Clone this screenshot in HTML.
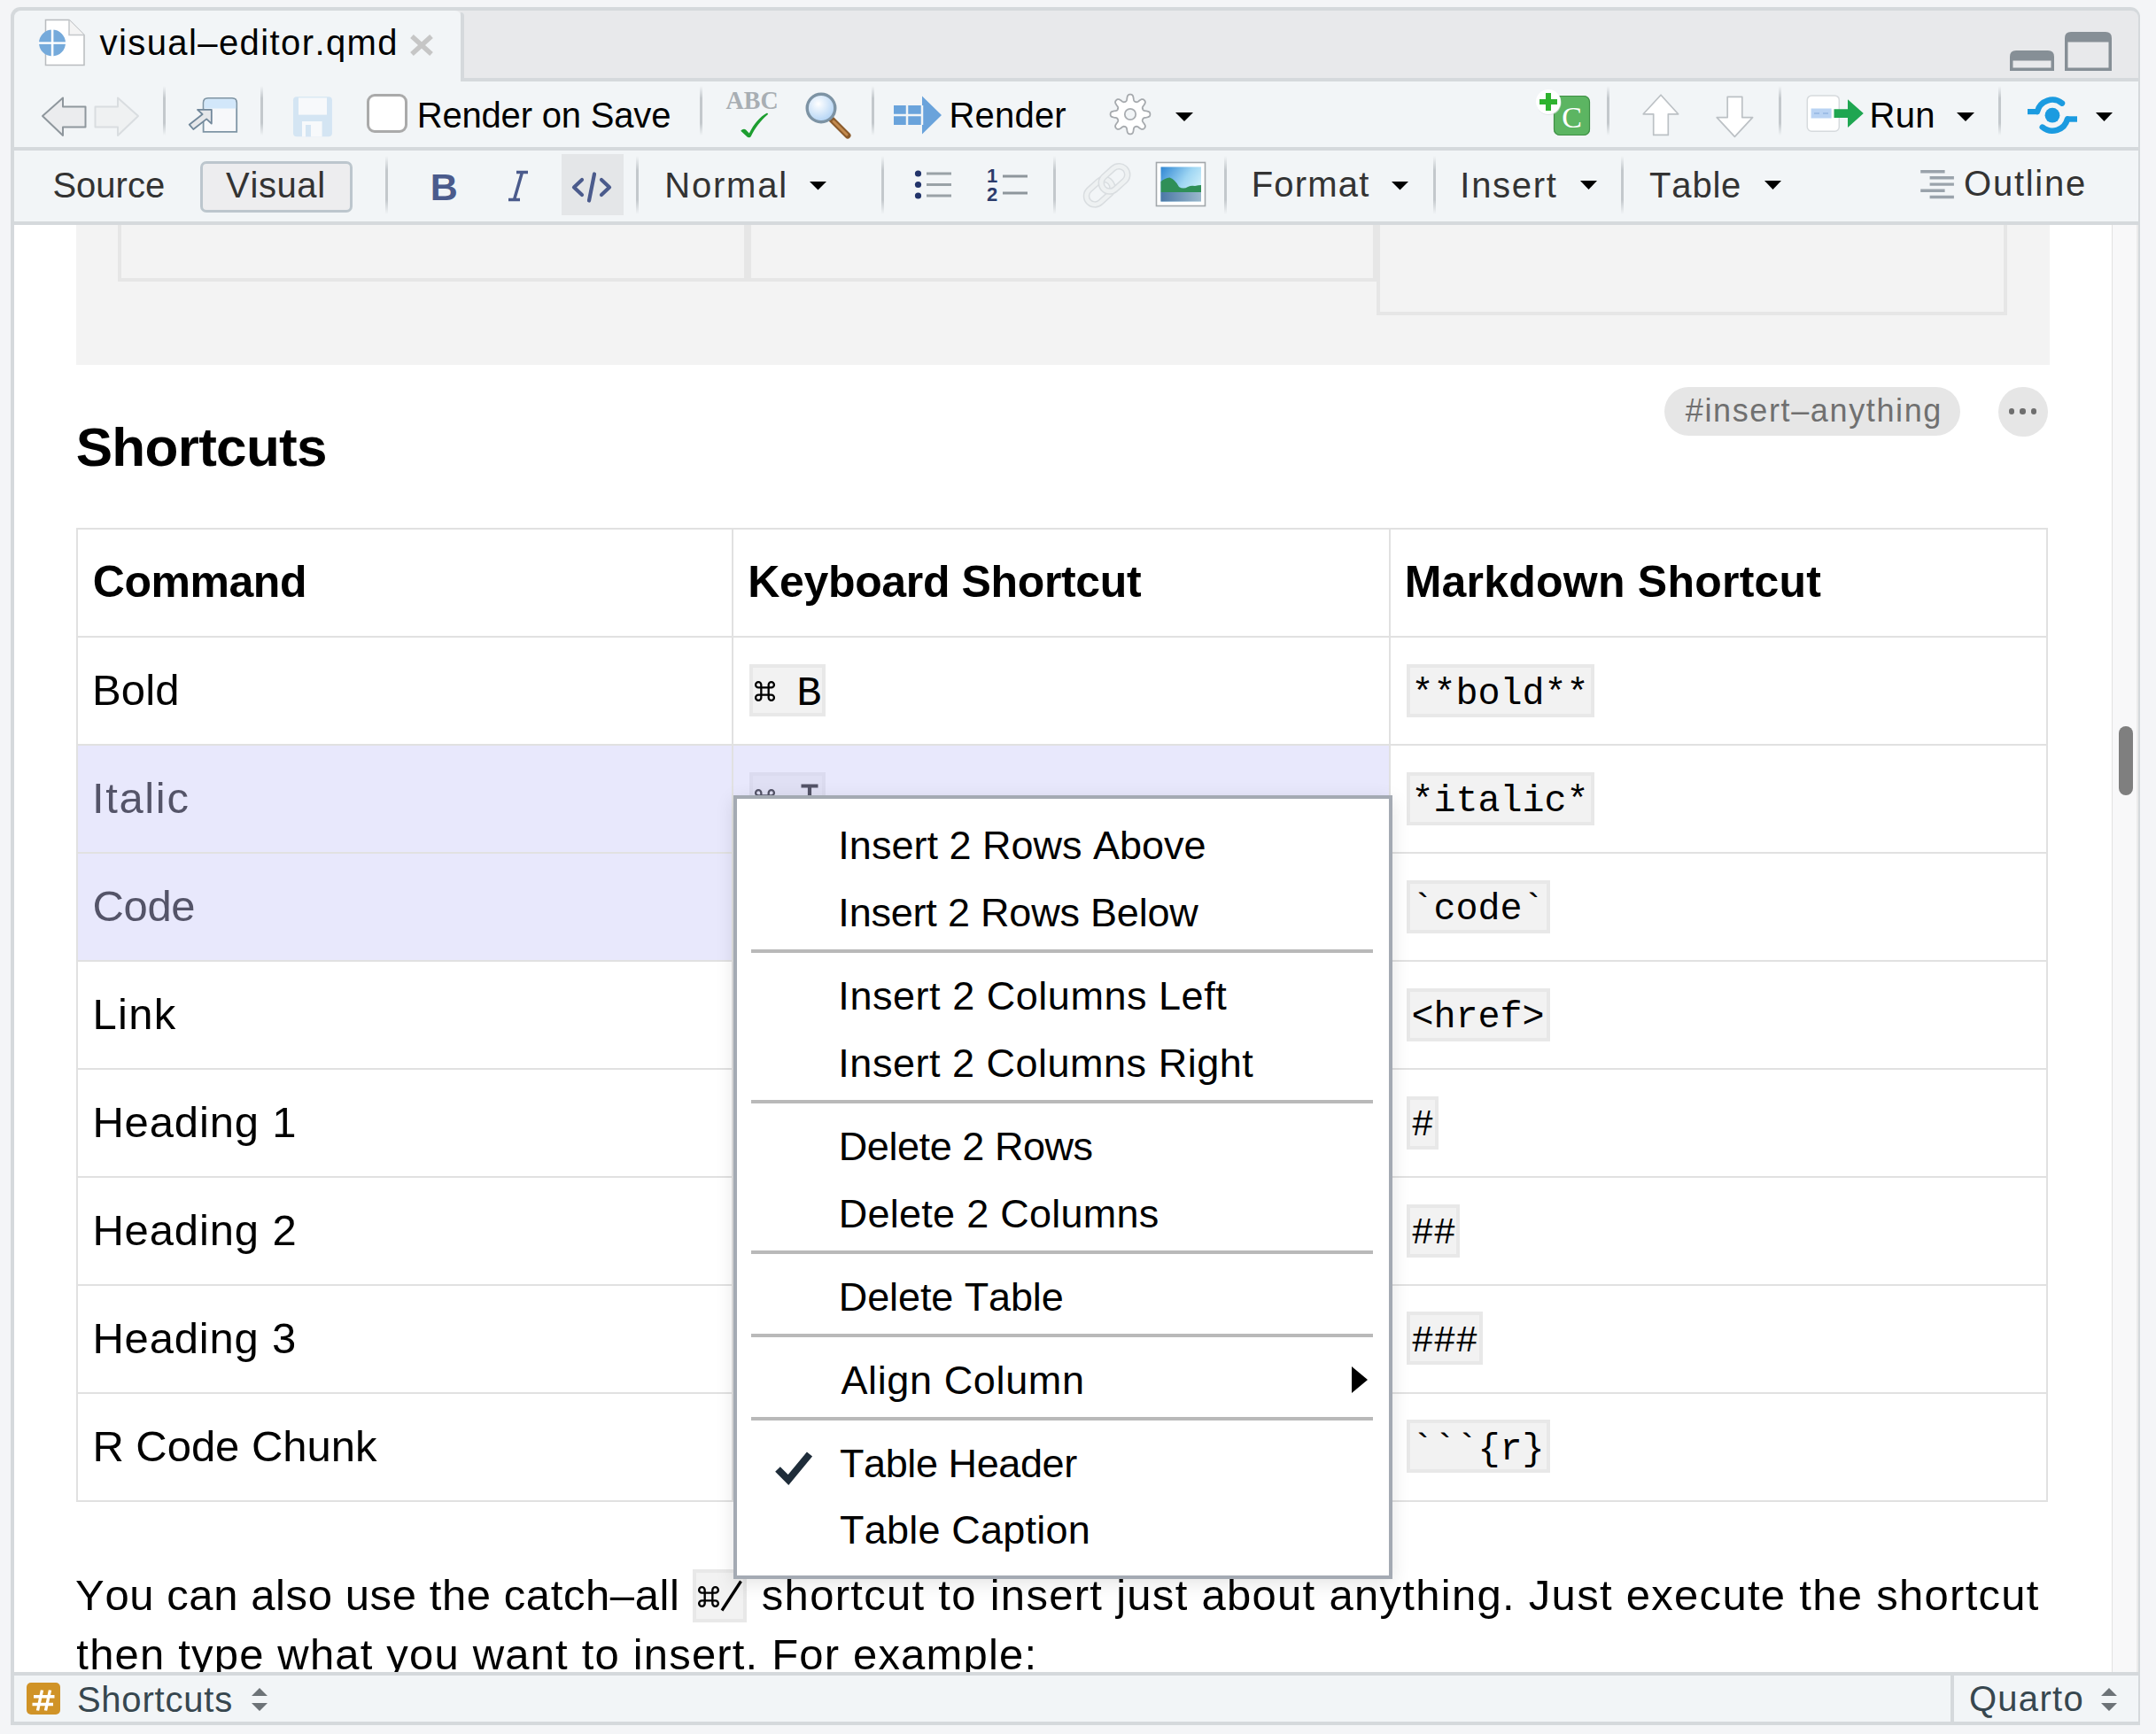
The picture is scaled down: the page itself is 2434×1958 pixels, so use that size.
<!DOCTYPE html>
<html><head><meta charset="utf-8"><title>visual-editor.qmd</title>
<style>
html,body{margin:0;padding:0;}
body{width:2434px;height:1958px;overflow:hidden;position:relative;background:#f4f5f7;font-family:"Liberation Sans", sans-serif;}
.t{position:absolute;line-height:1;white-space:pre;font-kerning:none;font-feature-settings:"kern" 0,"liga" 0;}
.r{position:absolute;}
</style></head><body>

<div class="r" style="left:12px;top:8px;width:2404px;height:1940px;background:#d5d9dc;border-radius:11px 11px 0 0;"></div>
<div class="r" style="left:16px;top:12px;width:2398px;height:76px;background:#e8e9eb;border-radius:8px 8px 0 0;"></div>
<div class="r" style="left:520px;top:88px;width:1896px;height:4px;background:#d5d9dc;"></div>
<div class="r" style="left:16px;top:12px;width:504px;height:80px;background:#f2f5f7;border-radius:8px 6px 0 0;"></div>
<div class="r" style="left:520px;top:14px;width:4px;height:74px;background:#d5d9dc;border-radius:0 6px 0 0;"></div>
<div class="r" style="left:16px;top:92px;width:2398px;height:74px;background:#f2f5f7;"></div>
<div class="r" style="left:16px;top:166px;width:2398px;height:4px;background:#d5d9dc;"></div>
<div class="r" style="left:16px;top:170px;width:2398px;height:80px;background:#f2f5f7;"></div>
<div class="r" style="left:16px;top:250px;width:2398px;height:4px;background:#d5d9dc;"></div>
<div class="r" style="left:16px;top:254px;width:2398px;height:1634px;background:#ffffff;"></div>
<svg class="r" style="left:40px;top:18px;" width="60" height="60" viewBox="0 0 60 60">
<path d="M11.5 4.5 H38 L55 21.5 V55.5 H11.5 Z" fill="#ffffff" stroke="#b9bcbf" stroke-width="1.5"/>
<path d="M38 4.5 V21.5 H55" fill="#f4f4f4" stroke="#c4c7ca" stroke-width="1.5"/>
<circle cx="19" cy="30.5" r="15" fill="#75aadb"/>
<rect x="17.8" y="15" width="2.6" height="31" fill="#ffffff"/>
<rect x="3.5" y="29.4" width="31" height="2.4" fill="#ffffff"/>
</svg>
<div class="t" style="left:112.56px;top:28.13px;font-size:40px;font-weight:normal;color:#000;letter-spacing:1.407px;font-family:'Liberation Sans', sans-serif;">visual–editor.qmd</div>
<svg class="r" style="left:461px;top:37px;" width="30" height="28" viewBox="0 0 30 28"><path d="M4 4 L26 24 M26 4 L4 24" stroke="#c6c6c6" stroke-width="5.5" stroke-linecap="butt"/></svg>
<svg class="r" style="left:2269px;top:57px;" width="50" height="23" viewBox="0 0 50 23"><path d="M1.75 21.25 V7 Q1.75 1.75 7 1.75 H43 Q48.25 1.75 48.25 7 V21.25 Z" fill="none" stroke="#868f96" stroke-width="3.5"/><rect x="1.75" y="1.75" width="46.5" height="9" rx="5" fill="#868f96"/><rect x="1.75" y="8" width="46.5" height="3.5" fill="#868f96"/></svg>
<svg class="r" style="left:2331px;top:36px;" width="53" height="44" viewBox="0 0 53 44"><path d="M1.75 42.25 V7 Q1.75 1.75 7 1.75 H46 Q51.25 1.75 51.25 7 V42.25 Z" fill="none" stroke="#868f96" stroke-width="3.5"/><rect x="1.75" y="1.75" width="49.5" height="9" rx="5" fill="#868f96"/><rect x="1.75" y="8" width="49.5" height="3.5" fill="#868f96"/></svg>
<div class="r" style="left:183.5px;top:97px;width:3px;height:56px;background:linear-gradient(to bottom, rgba(190,196,200,0) 0%, #c3c8cc 25%, #c3c8cc 75%, rgba(190,196,200,0) 100%);"></div>
<div class="r" style="left:293.5px;top:97px;width:3px;height:56px;background:linear-gradient(to bottom, rgba(190,196,200,0) 0%, #c3c8cc 25%, #c3c8cc 75%, rgba(190,196,200,0) 100%);"></div>
<div class="r" style="left:789.5px;top:97px;width:3px;height:56px;background:linear-gradient(to bottom, rgba(190,196,200,0) 0%, #c3c8cc 25%, #c3c8cc 75%, rgba(190,196,200,0) 100%);"></div>
<div class="r" style="left:983.5px;top:97px;width:3px;height:56px;background:linear-gradient(to bottom, rgba(190,196,200,0) 0%, #c3c8cc 25%, #c3c8cc 75%, rgba(190,196,200,0) 100%);"></div>
<div class="r" style="left:1813.5px;top:97px;width:3px;height:56px;background:linear-gradient(to bottom, rgba(190,196,200,0) 0%, #c3c8cc 25%, #c3c8cc 75%, rgba(190,196,200,0) 100%);"></div>
<div class="r" style="left:2007.5px;top:97px;width:3px;height:56px;background:linear-gradient(to bottom, rgba(190,196,200,0) 0%, #c3c8cc 25%, #c3c8cc 75%, rgba(190,196,200,0) 100%);"></div>
<div class="r" style="left:2255.5px;top:97px;width:3px;height:56px;background:linear-gradient(to bottom, rgba(190,196,200,0) 0%, #c3c8cc 25%, #c3c8cc 75%, rgba(190,196,200,0) 100%);"></div>
<svg class="r" style="left:44px;top:108px;" width="56" height="48" viewBox="0 0 56 48"><path d="M4 23 L27 2.5 V12.5 H52.5 V35.5 H27 V45 Z" fill="#ebecee" stroke="#8f979d" stroke-width="2" stroke-linejoin="round"/></svg>
<svg class="r" style="left:104px;top:108px;" width="56" height="48" viewBox="0 0 56 48"><path d="M52 23 L29 2.5 V12.5 H3.5 V35.5 H29 V45 Z" fill="#eff1f2" stroke="#d9dde0" stroke-width="2" stroke-linejoin="round"/></svg>
<svg class="r" style="left:212px;top:108px;" width="58" height="44" viewBox="0 0 58 44">
<path d="M17.6 40.8 V8 Q17.6 2.9 22.7 2.9 H50.1 Q55.2 2.9 55.2 8 V40.8 Z" fill="#f7f8fa" stroke="#7f95a5" stroke-width="1.8"/>
<path d="M18.5 14.5 V8.2 Q18.5 3.8 22.9 3.8 H49.9 Q54.3 3.8 54.3 8.2 V14.5 Z" fill="#d2e7fa"/>
<path d="M11 15.8 L26.8 15.8 L26.8 31.6 L21.2 26.4 L6.3 38 L1.7 32.7 L16.6 21 Z" fill="#e6e7ea" stroke="#71879a" stroke-width="1.8" stroke-linejoin="round"/>
</svg>
<svg class="r" style="left:329px;top:107px;" width="49" height="49" viewBox="0 0 49 49">
<rect x="2" y="2.2" width="43.9" height="45.1" rx="4" fill="#d4e5f3"/>
<rect x="8" y="3.4" width="32" height="19.2" fill="#f7f9fb"/>
<rect x="12" y="30" width="22.6" height="17.3" fill="#f7f9fb"/>
<rect x="16" y="34" width="6" height="13.3" fill="#d4e5f3"/>
</svg>
<div class="r" style="left:414px;top:106px;width:45.6px;height:43.6px;box-sizing:border-box;border:3.5px solid #aaaaaa;border-radius:9px;background:#fff;"></div>
<div class="t" style="left:470.72px;top:110.43px;font-size:40px;font-weight:normal;color:#000;letter-spacing:-0.186px;font-family:'Liberation Sans', sans-serif;">Render on Save</div>
<svg class="r" style="left:818px;top:98px;" width="64" height="28" viewBox="0 0 64 28"><text x="1.6" y="24.8" font-family="Liberation Serif" font-weight="bold" font-size="29.5" fill="#a8aeb3" textLength="59" lengthAdjust="spacingAndGlyphs">ABC</text></svg>
<svg class="r" style="left:834px;top:126px;" width="36" height="32" viewBox="0 0 36 32"><path d="M2.2 21.8 C4 19.5 6.5 19 8 20.5 L11.8 24.5 C17 14 24 6 31.5 1.8 C33 1.3 33.5 2.8 32.5 3.5 C25 10 18 19 13.8 28 C13 29.5 10.5 29.8 9.5 28.5 Z" fill="#1d9e30"/></svg>
<svg class="r" style="left:906px;top:102px;" width="58" height="56" viewBox="0 0 58 56">
<defs><radialGradient id="mg" cx="40%" cy="35%" r="70%"><stop offset="0" stop-color="#ffffff"/><stop offset="1" stop-color="#acd0f4"/></radialGradient></defs>
<path d="M33 33 L51 51" stroke="#8a5a2b" stroke-width="7" stroke-linecap="round"/>
<path d="M35 35 L50 50" stroke="#c38a4e" stroke-width="3" stroke-linecap="round"/>
<circle cx="21" cy="20" r="15.8" fill="url(#mg)" stroke="#7d93a4" stroke-width="3.4"/>
</svg>
<svg class="r" style="left:1007px;top:106px;" width="58" height="48" viewBox="0 0 58 48">
<path d="M2 13 H34 V2.5 L56 24 L34 45.5 V35 H2 Z" fill="#6aa3db"/>
<path d="M2 24 H34 M17 13 V35" stroke="#f2f5f7" stroke-width="2.5"/>
<path d="M34 13 V35" stroke="#f2f5f7" stroke-width="2.5"/>
</svg>
<div class="t" style="left:1071.52px;top:109.83px;font-size:40px;font-weight:normal;color:#000;letter-spacing:0.191px;font-family:'Liberation Sans', sans-serif;">Render</div>
<svg class="r" style="left:1248.6px;top:101.7px;" width="54" height="54" viewBox="0 0 54 54">
<path d="M27.00 4.60 L27.44 4.62 L27.88 4.67 L28.31 4.78 L28.74 4.94 L29.15 5.20 L29.54 5.58 L29.89 6.13 L30.19 6.87 L30.43 7.80 L30.62 8.82 L30.77 9.81 L30.93 10.65 L31.10 11.29 L31.30 11.76 L31.52 12.10 L31.76 12.35 L32.01 12.54 L32.28 12.70 L32.54 12.84 L32.82 12.96 L33.10 13.06 L33.38 13.16 L33.68 13.23 L34.00 13.27 L34.34 13.26 L34.74 13.18 L35.21 12.99 L35.79 12.66 L36.49 12.18 L37.30 11.59 L38.15 11.00 L38.98 10.51 L39.72 10.20 L40.35 10.06 L40.90 10.07 L41.37 10.18 L41.79 10.36 L42.17 10.59 L42.52 10.86 L42.84 11.16 L43.14 11.48 L43.41 11.83 L43.64 12.21 L43.82 12.63 L43.93 13.10 L43.94 13.65 L43.80 14.28 L43.49 15.02 L43.00 15.85 L42.41 16.70 L41.82 17.51 L41.34 18.21 L41.01 18.79 L40.82 19.26 L40.74 19.66 L40.73 20.00 L40.77 20.32 L40.84 20.62 L40.94 20.90 L41.04 21.18 L41.16 21.46 L41.30 21.72 L41.46 21.99 L41.65 22.24 L41.90 22.48 L42.24 22.70 L42.71 22.90 L43.35 23.07 L44.19 23.23 L45.18 23.38 L46.20 23.57 L47.13 23.81 L47.87 24.11 L48.42 24.46 L48.80 24.85 L49.06 25.26 L49.22 25.69 L49.33 26.12 L49.38 26.56 L49.40 27.00 L49.38 27.44 L49.33 27.88 L49.22 28.31 L49.06 28.74 L48.80 29.15 L48.42 29.54 L47.87 29.89 L47.13 30.19 L46.20 30.43 L45.18 30.62 L44.19 30.77 L43.35 30.93 L42.71 31.10 L42.24 31.30 L41.90 31.52 L41.65 31.76 L41.46 32.01 L41.30 32.28 L41.16 32.54 L41.04 32.82 L40.94 33.10 L40.84 33.38 L40.77 33.68 L40.73 34.00 L40.74 34.34 L40.82 34.74 L41.01 35.21 L41.34 35.79 L41.82 36.49 L42.41 37.30 L43.00 38.15 L43.49 38.98 L43.80 39.72 L43.94 40.35 L43.93 40.90 L43.82 41.37 L43.64 41.79 L43.41 42.17 L43.14 42.52 L42.84 42.84 L42.52 43.14 L42.17 43.41 L41.79 43.64 L41.37 43.82 L40.90 43.93 L40.35 43.94 L39.72 43.80 L38.98 43.49 L38.15 43.00 L37.30 42.41 L36.49 41.82 L35.79 41.34 L35.21 41.01 L34.74 40.82 L34.34 40.74 L34.00 40.73 L33.68 40.77 L33.38 40.84 L33.10 40.94 L32.82 41.04 L32.54 41.16 L32.28 41.30 L32.01 41.46 L31.76 41.65 L31.52 41.90 L31.30 42.24 L31.10 42.71 L30.93 43.35 L30.77 44.19 L30.62 45.18 L30.43 46.20 L30.19 47.13 L29.89 47.87 L29.54 48.42 L29.15 48.80 L28.74 49.06 L28.31 49.22 L27.88 49.33 L27.44 49.38 L27.00 49.40 L26.56 49.38 L26.12 49.33 L25.69 49.22 L25.26 49.06 L24.85 48.80 L24.46 48.42 L24.11 47.87 L23.81 47.13 L23.57 46.20 L23.38 45.18 L23.23 44.19 L23.07 43.35 L22.90 42.71 L22.70 42.24 L22.48 41.90 L22.24 41.65 L21.99 41.46 L21.72 41.30 L21.46 41.16 L21.18 41.04 L20.90 40.94 L20.62 40.84 L20.32 40.77 L20.00 40.73 L19.66 40.74 L19.26 40.82 L18.79 41.01 L18.21 41.34 L17.51 41.82 L16.70 42.41 L15.85 43.00 L15.02 43.49 L14.28 43.80 L13.65 43.94 L13.10 43.93 L12.63 43.82 L12.21 43.64 L11.83 43.41 L11.48 43.14 L11.16 42.84 L10.86 42.52 L10.59 42.17 L10.36 41.79 L10.18 41.37 L10.07 40.90 L10.06 40.35 L10.20 39.72 L10.51 38.98 L11.00 38.15 L11.59 37.30 L12.18 36.49 L12.66 35.79 L12.99 35.21 L13.18 34.74 L13.26 34.34 L13.27 34.00 L13.23 33.68 L13.16 33.38 L13.06 33.10 L12.96 32.82 L12.84 32.54 L12.70 32.28 L12.54 32.01 L12.35 31.76 L12.10 31.52 L11.76 31.30 L11.29 31.10 L10.65 30.93 L9.81 30.77 L8.82 30.62 L7.80 30.43 L6.87 30.19 L6.13 29.89 L5.58 29.54 L5.20 29.15 L4.94 28.74 L4.78 28.31 L4.67 27.88 L4.62 27.44 L4.60 27.00 L4.62 26.56 L4.67 26.12 L4.78 25.69 L4.94 25.26 L5.20 24.85 L5.58 24.46 L6.13 24.11 L6.87 23.81 L7.80 23.57 L8.82 23.38 L9.81 23.23 L10.65 23.07 L11.29 22.90 L11.76 22.70 L12.10 22.48 L12.35 22.24 L12.54 21.99 L12.70 21.72 L12.84 21.46 L12.96 21.18 L13.06 20.90 L13.16 20.62 L13.23 20.32 L13.27 20.00 L13.26 19.66 L13.18 19.26 L12.99 18.79 L12.66 18.21 L12.18 17.51 L11.59 16.70 L11.00 15.85 L10.51 15.02 L10.20 14.28 L10.06 13.65 L10.07 13.10 L10.18 12.63 L10.36 12.21 L10.59 11.83 L10.86 11.48 L11.16 11.16 L11.48 10.86 L11.83 10.59 L12.21 10.36 L12.63 10.18 L13.10 10.07 L13.65 10.06 L14.28 10.20 L15.02 10.51 L15.85 11.00 L16.70 11.59 L17.51 12.18 L18.21 12.66 L18.79 12.99 L19.26 13.18 L19.66 13.26 L20.00 13.27 L20.32 13.23 L20.62 13.16 L20.90 13.06 L21.18 12.96 L21.46 12.84 L21.72 12.70 L21.99 12.54 L22.24 12.35 L22.48 12.10 L22.70 11.76 L22.90 11.29 L23.07 10.65 L23.23 9.81 L23.38 8.82 L23.57 7.80 L23.81 6.87 L24.11 6.13 L24.46 5.58 L24.85 5.20 L25.26 4.94 L25.69 4.78 L26.12 4.67 L26.56 4.62 Z" fill="#ffffff" stroke="#a5a9ad" stroke-width="1.8" stroke-linejoin="round"/>
<circle cx="27" cy="27" r="6.2" fill="#f2f5f7" stroke="#a9adb1" stroke-width="1.8"/>
</svg>
<svg class="r" style="left:1327px;top:126.5px;" width="20" height="10.0" viewBox="0 0 20 10.0"><path d="M0 0 H20 L10.0 10.0 Z" fill="#000"/></svg>
<svg class="r" style="left:1730px;top:98px;" width="68" height="58" viewBox="0 0 68 58">
<rect x="24" y="10" width="41" height="45" rx="7" fill="#5cb562"/>
<rect x="24.5" y="10.5" width="40" height="44" rx="6.5" fill="none" stroke="#3f8f45" stroke-width="1.2"/>
<text x="44.5" y="46" text-anchor="middle" font-family="Liberation Serif" font-size="34" fill="#ffffff">C</text>
<circle cx="18.5" cy="18" r="14" fill="#d9dcde" opacity="0.7"/><circle cx="18" cy="17" r="14" fill="#ffffff"/>
<path d="M18 7 V27 M8 17 H28" stroke="#2fb32f" stroke-width="6"/>
</svg>
<svg class="r" style="left:1851px;top:104px;" width="48" height="52" viewBox="0 0 48 52"><path d="M24 3.2 L43.6 24.8 H32.3 V48.4 H15.7 V24.8 H4.2 Z" fill="#ffffff" stroke="#bcc1c5" stroke-width="1.7" stroke-linejoin="round"/></svg>
<svg class="r" style="left:1935px;top:106px;" width="48" height="52" viewBox="0 0 48 52"><path d="M23.4 48.4 L43.6 26.6 H31.8 V3.4 H15.2 V26.6 H3.2 Z" fill="#ffffff" stroke="#bcc1c5" stroke-width="1.7" stroke-linejoin="round"/></svg>
<svg class="r" style="left:2037px;top:104px;" width="70" height="48" viewBox="0 0 70 48">
<rect x="3.3" y="3.9" width="36" height="40.3" rx="5" fill="#ffffff" stroke="#d6dadd" stroke-width="1.5"/>
<rect x="7.6" y="18.5" width="23" height="11" fill="#b9d3f3"/>
<path d="M11 24 H17 M21 24 H27" stroke="#9dbde6" stroke-width="2"/>
<path d="M33.5 19.3 H49 V8.2 L66.8 24.1 L49 39.9 V29 H33.5 Z" fill="#1fa651"/>
</svg>
<div class="t" style="left:2110.42px;top:110.03px;font-size:40px;font-weight:normal;color:#000;letter-spacing:0.400px;font-family:'Liberation Sans', sans-serif;">Run</div>
<svg class="r" style="left:2209px;top:127px;" width="20" height="10" viewBox="0 0 20 10"><path d="M0 0 H20 L10.0 10 Z" fill="#000"/></svg>
<svg class="r" style="left:2286px;top:105px;" width="62" height="50" viewBox="0 0 62 50">
<path d="M14 21 A17.5 17.5 0 0 1 42 11.6" fill="none" stroke="#1b9be0" stroke-width="6.5" stroke-linecap="round"/>
<path d="M48 29.4 A17.5 17.5 0 0 1 19.75 38.6" fill="none" stroke="#1b9be0" stroke-width="6.5" stroke-linecap="round"/>
<rect x="3" y="18" width="12" height="6.2" fill="#1b9be0"/>
<rect x="47" y="26.3" width="12" height="6.4" fill="#1b9be0"/>
<circle cx="31" cy="25.2" r="8.4" fill="#1b9be0"/>
</svg>
<svg class="r" style="left:2366px;top:127px;" width="19" height="10" viewBox="0 0 19 10"><path d="M0 0 H19 L9.5 10 Z" fill="#000"/></svg>
<div class="r" style="left:434.5px;top:176px;width:3px;height:66px;background:linear-gradient(to bottom, rgba(190,196,200,0) 0%, #c3c8cc 25%, #c3c8cc 75%, rgba(190,196,200,0) 100%);"></div>
<div class="r" style="left:717.5px;top:176px;width:3px;height:66px;background:linear-gradient(to bottom, rgba(190,196,200,0) 0%, #c3c8cc 25%, #c3c8cc 75%, rgba(190,196,200,0) 100%);"></div>
<div class="r" style="left:994.5px;top:176px;width:3px;height:66px;background:linear-gradient(to bottom, rgba(190,196,200,0) 0%, #c3c8cc 25%, #c3c8cc 75%, rgba(190,196,200,0) 100%);"></div>
<div class="r" style="left:1188.5px;top:176px;width:3px;height:66px;background:linear-gradient(to bottom, rgba(190,196,200,0) 0%, #c3c8cc 25%, #c3c8cc 75%, rgba(190,196,200,0) 100%);"></div>
<div class="r" style="left:1382.1px;top:176px;width:3px;height:66px;background:linear-gradient(to bottom, rgba(190,196,200,0) 0%, #c3c8cc 25%, #c3c8cc 75%, rgba(190,196,200,0) 100%);"></div>
<div class="r" style="left:1617.5px;top:176px;width:3px;height:66px;background:linear-gradient(to bottom, rgba(190,196,200,0) 0%, #c3c8cc 25%, #c3c8cc 75%, rgba(190,196,200,0) 100%);"></div>
<div class="r" style="left:1829.5px;top:176px;width:3px;height:66px;background:linear-gradient(to bottom, rgba(190,196,200,0) 0%, #c3c8cc 25%, #c3c8cc 75%, rgba(190,196,200,0) 100%);"></div>
<div class="t" style="left:59.38px;top:188.73px;font-size:40px;font-weight:normal;color:#333333;letter-spacing:0.011px;font-family:'Liberation Sans', sans-serif;">Source</div>
<div class="r" style="left:226px;top:182px;width:172px;height:58px;box-sizing:border-box;border:3px solid #bcc6cd;border-radius:7px;background:#ededef;"></div>
<div class="t" style="left:255.12px;top:188.73px;font-size:40px;font-weight:normal;color:#333333;letter-spacing:0.601px;font-family:'Liberation Sans', sans-serif;">Visual</div>
<div class="t" style="left:485.72px;top:189.59px;font-size:43px;font-weight:bold;color:#4b5b8c;letter-spacing:0.000px;font-family:'Liberation Sans', sans-serif;">B</div>
<svg class="r" style="left:570px;top:192px;" width="30" height="36" viewBox="0 0 30 36"><path d="M13 2.5 H26 M4 33.5 H17 M19.5 2.5 L10.5 33.5" fill="none" stroke="#4b5b8c" stroke-width="3.5"/></svg>
<div class="r" style="left:634px;top:174px;width:70px;height:69px;background:#e4e6e8;"></div>
<svg class="r" style="left:644px;top:194px;" width="48" height="35" viewBox="0 0 48 35"><path d="M13 9 L4 17.5 L13 26 M35 9 L44 17.5 L35 26 M27 2.5 L21 32.5" fill="none" stroke="#4b5b8c" stroke-width="4.2" stroke-linecap="round" stroke-linejoin="round"/></svg>
<div class="t" style="left:750.32px;top:188.63px;font-size:40px;font-weight:normal;color:#333333;letter-spacing:1.770px;font-family:'Liberation Sans', sans-serif;">Normal</div>
<svg class="r" style="left:913.5px;top:205px;" width="19.0" height="9.5" viewBox="0 0 19.0 9.5"><path d="M0 0 H19.0 L9.5 9.5 Z" fill="#000"/></svg>
<svg class="r" style="left:1031px;top:191px;" width="46" height="38" viewBox="0 0 46 38">
<circle cx="5.5" cy="5" r="3.6" fill="#22346a"/><circle cx="5.5" cy="17.5" r="3.6" fill="#22346a"/><circle cx="5.5" cy="30" r="3.6" fill="#22346a"/>
<path d="M15 5 H43 M15 17.5 H43 M15 30 H43" stroke="#9aa2a7" stroke-width="3"/>
</svg>
<svg class="r" style="left:1113px;top:189px;" width="50" height="40" viewBox="0 0 50 40">
<text x="7" y="17" text-anchor="middle" font-family="Liberation Sans" font-weight="bold" font-size="22" fill="#2c3c6c">1</text>
<text x="7" y="38" text-anchor="middle" font-family="Liberation Sans" font-weight="bold" font-size="22" fill="#2c3c6c">2</text>
<path d="M19 10 H47 M19 29 H47" stroke="#8e969c" stroke-width="3"/>
</svg>
<svg class="r" style="left:1220px;top:180px;" width="60" height="58" viewBox="0 0 60 58">
<g fill="none">
<rect x="4.7" y="27.2" width="33" height="19" rx="9.5" transform="rotate(-42 21.2 36.7)" stroke="#d9dde0" stroke-width="7.5"/>
<rect x="4.7" y="27.2" width="33" height="19" rx="9.5" transform="rotate(-42 21.2 36.7)" stroke="#eef1f2" stroke-width="4.5"/>
<rect x="21.5" y="12.4" width="33" height="19" rx="9.5" transform="rotate(-42 38 21.9)" stroke="#d9dde0" stroke-width="7.5"/>
<rect x="21.5" y="12.4" width="33" height="19" rx="9.5" transform="rotate(-42 38 21.9)" stroke="#eef1f2" stroke-width="4.5"/>
</g></svg>
<svg class="r" style="left:1303px;top:181px;" width="60" height="54" viewBox="0 0 60 54">
<defs><linearGradient id="sky" x1="0" y1="0" x2="1" y2="0.6"><stop offset="0" stop-color="#2f86d3"/><stop offset="0.6" stop-color="#9fd6f3"/><stop offset="1" stop-color="#d2f1fb"/></linearGradient>
<linearGradient id="wat" x1="0" y1="0" x2="1" y2="0"><stop offset="0" stop-color="#4b78a6"/><stop offset="1" stop-color="#9bb8cc"/></linearGradient></defs>
<rect x="2.5" y="2.5" width="55" height="49" fill="#ffffff" stroke="#a2a7ab" stroke-width="1.6"/>
<rect x="7.5" y="7.5" width="45.5" height="39" fill="url(#sky)"/>
<path d="M7.5 24 Q12 20 17.5 19.5 Q24 22 28 30 Q33 33 38 30 Q42 28 46 29 Q50 28 53 28 V36 H7.5 Z" fill="#2f8f57"/>
<rect x="7.5" y="36" width="45.5" height="10.5" fill="url(#wat)"/>
</svg>
<div class="t" style="left:1412.72px;top:187.83px;font-size:40px;font-weight:normal;color:#333333;letter-spacing:1.179px;font-family:'Liberation Sans', sans-serif;">Format</div>
<svg class="r" style="left:1571px;top:205px;" width="19" height="9.5" viewBox="0 0 19 9.5"><path d="M0 0 H19 L9.5 9.5 Z" fill="#000"/></svg>
<div class="t" style="left:1648.31px;top:188.53px;font-size:40px;font-weight:normal;color:#333333;letter-spacing:1.729px;font-family:'Liberation Sans', sans-serif;">Insert</div>
<svg class="r" style="left:1783.5px;top:204px;" width="19.0" height="10" viewBox="0 0 19.0 10"><path d="M0 0 H19.0 L9.5 10 Z" fill="#000"/></svg>
<div class="t" style="left:1862.10px;top:188.53px;font-size:40px;font-weight:normal;color:#333333;letter-spacing:0.804px;font-family:'Liberation Sans', sans-serif;">Table</div>
<svg class="r" style="left:1991.5px;top:204px;" width="19.0" height="10" viewBox="0 0 19.0 10"><path d="M0 0 H19.0 L9.5 10 Z" fill="#000"/></svg>
<svg class="r" style="left:2166px;top:189px;" width="42" height="37" viewBox="0 0 42 37"><path d="M2.2 4.75 H29.6 M12.6 11.8 H39.9 M12.6 19.15 H39.9 M2.2 26.3 H29.6 M12.6 33.45 H39.9" stroke="#9aa3ab" stroke-width="3.4"/></svg>
<div class="t" style="left:2217.11px;top:186.63px;font-size:40px;font-weight:normal;color:#333333;letter-spacing:1.722px;font-family:'Liberation Sans', sans-serif;">Outline</div>
<div class="r" style="left:86px;top:254px;width:2228px;height:158px;background:#f3f3f3;"></div>
<div class="r" style="left:133px;top:254px;width:3.6px;height:64px;background:#e6e6e6;"></div>
<div class="r" style="left:133px;top:314px;width:711px;height:4px;background:#e6e6e6;"></div>
<div class="r" style="left:840px;top:254px;width:8px;height:64px;background:#e6e6e6;"></div>
<div class="r" style="left:848px;top:314px;width:706px;height:4px;background:#e6e6e6;"></div>
<div class="r" style="left:1550px;top:254px;width:8px;height:64px;background:#e6e6e6;"></div>
<div class="r" style="left:1554px;top:318px;width:4px;height:38px;background:#e6e6e6;"></div>
<div class="r" style="left:1554px;top:352px;width:712px;height:4px;background:#e6e6e6;"></div>
<div class="r" style="left:2262px;top:254px;width:4px;height:102px;background:#e6e6e6;"></div>
<div class="t" style="left:85.71px;top:474.31px;font-size:62px;font-weight:bold;color:#000;letter-spacing:-0.691px;font-family:'Liberation Sans', sans-serif;">Shortcuts</div>
<div class="r" style="left:1879px;top:436.5px;width:334px;height:55.5px;background:#e6e6e6;border-radius:28px;"></div>
<div class="t" style="left:1902.84px;top:445.72px;font-size:36px;font-weight:normal;color:#707070;letter-spacing:1.620px;font-family:'Liberation Sans', sans-serif;">#insert–anything</div>
<div class="r" style="left:2256px;top:437px;width:55.5px;height:55.5px;background:#e6e6e6;border-radius:50%;"></div>
<div class="r" style="left:2267.8px;top:461.2px;width:6.4px;height:6.4px;background:#6e6e6e;border-radius:50%;"></div>
<div class="r" style="left:2280.3px;top:461.2px;width:6.4px;height:6.4px;background:#6e6e6e;border-radius:50%;"></div>
<div class="r" style="left:2292.8px;top:461.2px;width:6.4px;height:6.4px;background:#6e6e6e;border-radius:50%;"></div>
<div class="r" style="left:86px;top:596px;width:2226px;height:2px;background:#e1e1e1;"></div>
<div class="r" style="left:86px;top:718px;width:2226px;height:2px;background:#e1e1e1;"></div>
<div class="r" style="left:86px;top:840px;width:2226px;height:2px;background:#e1e1e1;"></div>
<div class="r" style="left:86px;top:962px;width:2226px;height:2px;background:#e1e1e1;"></div>
<div class="r" style="left:86px;top:1084px;width:2226px;height:2px;background:#e1e1e1;"></div>
<div class="r" style="left:86px;top:1206px;width:2226px;height:2px;background:#e1e1e1;"></div>
<div class="r" style="left:86px;top:1328px;width:2226px;height:2px;background:#e1e1e1;"></div>
<div class="r" style="left:86px;top:1450px;width:2226px;height:2px;background:#e1e1e1;"></div>
<div class="r" style="left:86px;top:1572px;width:2226px;height:2px;background:#e1e1e1;"></div>
<div class="r" style="left:86px;top:1694px;width:2226px;height:2px;background:#e1e1e1;"></div>
<div class="r" style="left:86px;top:596px;width:2px;height:1100px;background:#e1e1e1;"></div>
<div class="r" style="left:826px;top:596px;width:2px;height:1100px;background:#e1e1e1;"></div>
<div class="r" style="left:1568px;top:596px;width:2px;height:1100px;background:#e1e1e1;"></div>
<div class="r" style="left:2310px;top:596px;width:2px;height:1100px;background:#e1e1e1;"></div>
<div class="t" style="left:104.75px;top:631.67px;font-size:50px;font-weight:bold;color:#000;letter-spacing:-0.452px;font-family:'Liberation Sans', sans-serif;">Command</div>
<div class="t" style="left:844.36px;top:632.07px;font-size:50px;font-weight:bold;color:#000;letter-spacing:-0.362px;font-family:'Liberation Sans', sans-serif;">Keyboard Shortcut</div>
<div class="t" style="left:1585.66px;top:632.27px;font-size:50px;font-weight:bold;color:#000;letter-spacing:0.230px;font-family:'Liberation Sans', sans-serif;">Markdown Shortcut</div>
<div class="t" style="left:103.88px;top:755.41px;font-size:49px;font-weight:normal;color:#000;letter-spacing:0.202px;font-family:'Liberation Sans', sans-serif;">Bold</div>
<div class="t" style="left:103.88px;top:877.31px;font-size:49px;font-weight:normal;color:#000;letter-spacing:1.652px;font-family:'Liberation Sans', sans-serif;">Italic</div>
<div class="t" style="left:104.51px;top:999.21px;font-size:49px;font-weight:normal;color:#000;letter-spacing:-0.358px;font-family:'Liberation Sans', sans-serif;">Code</div>
<div class="t" style="left:104.38px;top:1121.11px;font-size:49px;font-weight:normal;color:#000;letter-spacing:1.320px;font-family:'Liberation Sans', sans-serif;">Link</div>
<div class="t" style="left:104.38px;top:1243.01px;font-size:49px;font-weight:normal;color:#000;letter-spacing:0.852px;font-family:'Liberation Sans', sans-serif;">Heading 1</div>
<div class="t" style="left:104.38px;top:1364.91px;font-size:49px;font-weight:normal;color:#000;letter-spacing:0.861px;font-family:'Liberation Sans', sans-serif;">Heading 2</div>
<div class="t" style="left:104.38px;top:1486.81px;font-size:49px;font-weight:normal;color:#000;letter-spacing:0.822px;font-family:'Liberation Sans', sans-serif;">Heading 3</div>
<div class="t" style="left:104.38px;top:1608.71px;font-size:49px;font-weight:normal;color:#000;letter-spacing:-0.032px;font-family:'Liberation Sans', sans-serif;">R Code Chunk</div>
<div class="r" style="left:846px;top:750px;width:86px;height:59px;box-sizing:border-box;background:#f2f2f2;border:4px solid #e8e8e8;"></div>
<svg class="r" style="left:850.5px;top:768.0px;" width="25" height="25" viewBox="0 0 24 24"><path d="M8 8 H16 V16 H8 Z M8 8 V5 A3 3 0 1 0 5 8 Z M16 8 V5 A3 3 0 1 1 19 8 Z M8 16 V19 A3 3 0 1 1 5 16 Z M16 16 V19 A3 3 0 1 0 19 16 Z" fill="none" stroke="#000" stroke-width="2.2"/></svg>
<div class="t" style="left:899.28px;top:759.99px;font-size:47px;font-weight:normal;color:#000;letter-spacing:0.000px;font-family:'Liberation Mono', monospace;">B</div>
<div class="r" style="left:846px;top:872px;width:86px;height:59px;box-sizing:border-box;background:#f2f2f2;border:4px solid #e8e8e8;"></div>
<svg class="r" style="left:850.5px;top:889.9px;" width="25" height="25" viewBox="0 0 24 24"><path d="M8 8 H16 V16 H8 Z M8 8 V5 A3 3 0 1 0 5 8 Z M16 8 V5 A3 3 0 1 1 19 8 Z M8 16 V19 A3 3 0 1 1 5 16 Z M16 16 V19 A3 3 0 1 0 19 16 Z" fill="none" stroke="#000" stroke-width="2.2"/></svg>
<svg class="r" style="left:903px;top:884px;" width="22" height="36" viewBox="0 0 22 36"><path d="M1.5 3.5 H20.5 M1.5 32.5 H20.5 M11 3.5 V32.5" stroke="#000" stroke-width="4.2"/></svg>
<div class="r" style="left:1588px;top:750px;width:212px;height:60px;box-sizing:border-box;background:#f2f2f2;border:4px solid #e8e8e8;"></div>
<div class="t" style="left:1593.50px;top:763.55px;font-size:41.7px;font-family:'Liberation Mono',monospace;color:#000;">**bold**</div>
<div class="r" style="left:1588px;top:872px;width:212px;height:60px;box-sizing:border-box;background:#f2f2f2;border:4px solid #e8e8e8;"></div>
<div class="t" style="left:1593.50px;top:885.45px;font-size:41.7px;font-family:'Liberation Mono',monospace;color:#000;">*italic*</div>
<div class="r" style="left:1588px;top:994px;width:162px;height:60px;box-sizing:border-box;background:#f2f2f2;border:4px solid #e8e8e8;"></div>
<div class="t" style="left:1593.50px;top:1007.35px;font-size:41.7px;font-family:'Liberation Mono',monospace;color:#000;">`code`</div>
<div class="r" style="left:1588px;top:1116px;width:162px;height:60px;box-sizing:border-box;background:#f2f2f2;border:4px solid #e8e8e8;"></div>
<div class="t" style="left:1593.50px;top:1129.25px;font-size:41.7px;font-family:'Liberation Mono',monospace;color:#000;">&lt;href&gt;</div>
<div class="r" style="left:1588px;top:1238px;width:36px;height:60px;box-sizing:border-box;background:#f2f2f2;border:4px solid #e8e8e8;"></div>
<div class="t" style="left:1593.50px;top:1251.15px;font-size:41.7px;font-family:'Liberation Mono',monospace;color:#000;">#</div>
<div class="r" style="left:1588px;top:1360px;width:60px;height:60px;box-sizing:border-box;background:#f2f2f2;border:4px solid #e8e8e8;"></div>
<div class="t" style="left:1593.50px;top:1373.05px;font-size:41.7px;font-family:'Liberation Mono',monospace;color:#000;">##</div>
<div class="r" style="left:1588px;top:1481px;width:86px;height:60px;box-sizing:border-box;background:#f2f2f2;border:4px solid #e8e8e8;"></div>
<div class="t" style="left:1593.50px;top:1494.95px;font-size:41.7px;font-family:'Liberation Mono',monospace;color:#000;">###</div>
<div class="r" style="left:1588px;top:1603px;width:162px;height:60px;box-sizing:border-box;background:#f2f2f2;border:4px solid #e8e8e8;"></div>
<div class="t" style="left:1593.50px;top:1616.85px;font-size:41.7px;font-family:'Liberation Mono',monospace;color:#000;">```{r}</div>
<div class="r" style="left:88px;top:842px;width:738px;height:120px;background:rgba(200,200,248,0.42);"></div>
<div class="r" style="left:828px;top:842px;width:740px;height:120px;background:rgba(200,200,248,0.42);"></div>
<div class="r" style="left:88px;top:964px;width:738px;height:120px;background:rgba(200,200,248,0.42);"></div>
<div class="r" style="left:828px;top:964px;width:740px;height:120px;background:rgba(200,200,248,0.42);"></div>
<div class="t" style="left:85.12px;top:1776.51px;font-size:49px;font-weight:normal;color:#000;letter-spacing:0.590px;font-family:'Liberation Sans', sans-serif;">You can also use the catch–all</div>
<div class="r" style="left:782px;top:1772px;width:61px;height:60px;box-sizing:border-box;background:#f2f2f2;border:4px solid #e8e8e8;"></div>
<svg class="r" style="left:786.5px;top:1790px;" width="26" height="26" viewBox="0 0 24 24"><path d="M8 8 H16 V16 H8 Z M8 8 V5 A3 3 0 1 0 5 8 Z M16 8 V5 A3 3 0 1 1 19 8 Z M8 16 V19 A3 3 0 1 1 5 16 Z M16 16 V19 A3 3 0 1 0 19 16 Z" fill="none" stroke="#000" stroke-width="2.2"/></svg>
<svg class="r" style="left:812px;top:1784px;" width="27" height="36" viewBox="0 0 27 36"><path d="M24.5 1.5 L3 34.5" stroke="#000" stroke-width="3.3"/></svg>
<div class="t" style="left:859.84px;top:1776.51px;font-size:49px;font-weight:normal;color:#000;letter-spacing:1.289px;font-family:'Liberation Sans', sans-serif;">shortcut to insert just about anything. Just execute the shortcut</div>
<div class="t" style="left:86.36px;top:1844.31px;font-size:49px;font-weight:normal;color:#000;letter-spacing:1.178px;font-family:'Liberation Sans', sans-serif;">then type what you want to insert. For example:</div>
<div class="r" style="left:2384px;top:254px;width:30px;height:1634px;background:#f8f8f9;border-left:1.5px solid #e2e2e2;border-right:2px solid #ebebeb;box-sizing:border-box;"></div>
<div class="r" style="left:2392px;top:820px;width:16px;height:78px;background:#7f7f7f;border-radius:8px;"></div>
<div class="r" style="left:828px;top:898px;width:744px;height:885px;box-sizing:border-box;background:#ffffff;border:4px solid #a4aab3;box-shadow:0 5px 20px rgba(0,0,0,0.11);"></div>
<div class="t" style="left:946.35px;top:932.20px;font-size:45px;font-weight:normal;color:#000;letter-spacing:0.003px;font-family:'Liberation Sans', sans-serif;">Insert 2 Rows Above</div>
<div class="t" style="left:946.35px;top:1007.90px;font-size:45px;font-weight:normal;color:#000;letter-spacing:-0.207px;font-family:'Liberation Sans', sans-serif;">Insert 2 Rows Below</div>
<div class="t" style="left:946.35px;top:1101.90px;font-size:45px;font-weight:normal;color:#000;letter-spacing:0.534px;font-family:'Liberation Sans', sans-serif;">Insert 2 Columns Left</div>
<div class="t" style="left:946.35px;top:1177.50px;font-size:45px;font-weight:normal;color:#000;letter-spacing:0.509px;font-family:'Liberation Sans', sans-serif;">Insert 2 Columns Right</div>
<div class="t" style="left:946.81px;top:1272.20px;font-size:45px;font-weight:normal;color:#000;letter-spacing:-0.443px;font-family:'Liberation Sans', sans-serif;">Delete 2 Rows</div>
<div class="t" style="left:946.81px;top:1347.80px;font-size:45px;font-weight:normal;color:#000;letter-spacing:0.250px;font-family:'Liberation Sans', sans-serif;">Delete 2 Columns</div>
<div class="t" style="left:946.81px;top:1441.70px;font-size:45px;font-weight:normal;color:#000;letter-spacing:-0.105px;font-family:'Liberation Sans', sans-serif;">Delete Table</div>
<div class="t" style="left:949.41px;top:1535.70px;font-size:45px;font-weight:normal;color:#000;letter-spacing:0.626px;font-family:'Liberation Sans', sans-serif;">Align Column</div>
<div class="t" style="left:947.99px;top:1629.90px;font-size:45px;font-weight:normal;color:#000;letter-spacing:-0.409px;font-family:'Liberation Sans', sans-serif;">Table Header</div>
<div class="t" style="left:947.99px;top:1704.90px;font-size:45px;font-weight:normal;color:#000;letter-spacing:0.213px;font-family:'Liberation Sans', sans-serif;">Table Caption</div>
<div class="r" style="left:848px;top:1072px;width:702px;height:4px;background:#b9b9b9;"></div>
<div class="r" style="left:848px;top:1242px;width:702px;height:4px;background:#b9b9b9;"></div>
<div class="r" style="left:848px;top:1412px;width:702px;height:4px;background:#b9b9b9;"></div>
<div class="r" style="left:848px;top:1506px;width:702px;height:4px;background:#b9b9b9;"></div>
<div class="r" style="left:848px;top:1600px;width:702px;height:4px;background:#b9b9b9;"></div>
<svg class="r" style="left:1525px;top:1542px;" width="20" height="32" viewBox="0 0 20 32"><path d="M1 1 L19 16 L1 31 Z" fill="#000"/></svg>
<svg class="r" style="left:874px;top:1637px;" width="44" height="42" viewBox="0 0 44 42"><path d="M4 22 L16 34 L40 5" fill="none" stroke="#1f2d3a" stroke-width="8" stroke-linejoin="miter"/></svg>
<div class="r" style="left:16px;top:1888px;width:2398px;height:4px;background:#d5d9dc;"></div>
<div class="r" style="left:16px;top:1892px;width:2398px;height:52px;background:#f2f5f7;"></div>
<div class="r" style="left:2202px;top:1892px;width:4px;height:52px;background:#d5d9dc;"></div>
<div class="r" style="left:30px;top:1900px;width:38px;height:36px;background:#d09327;border-radius:5px;"></div>
<svg class="r" style="left:30px;top:1900px;" width="38" height="36" viewBox="0 0 38 36"><path d="M17.5 8.5 L12.5 31.5 M26.5 8.5 L21.5 31.5 M8 15.8 H31.5 M6.5 24.5 H30" stroke="#ffffff" stroke-width="3.4"/></svg>
<div class="t" style="left:86.88px;top:1898.63px;font-size:40px;font-weight:normal;color:#37474f;letter-spacing:0.787px;font-family:'Liberation Sans', sans-serif;">Shortcuts</div>
<svg class="r" style="left:283px;top:1904px;" width="20" height="30" viewBox="0 0 20 30"><path d="M10 2 L19 11 H1 Z M10 28 L19 19 H1 Z" fill="#6d7377"/></svg>
<div class="t" style="left:2222.91px;top:1897.93px;font-size:40px;font-weight:normal;color:#37474f;letter-spacing:1.298px;font-family:'Liberation Sans', sans-serif;">Quarto</div>
<svg class="r" style="left:2371px;top:1904px;" width="20" height="30" viewBox="0 0 20 30"><path d="M10 2 L19 11 H1 Z M10 28 L19 19 H1 Z" fill="#6d7377"/></svg>
</body></html>
